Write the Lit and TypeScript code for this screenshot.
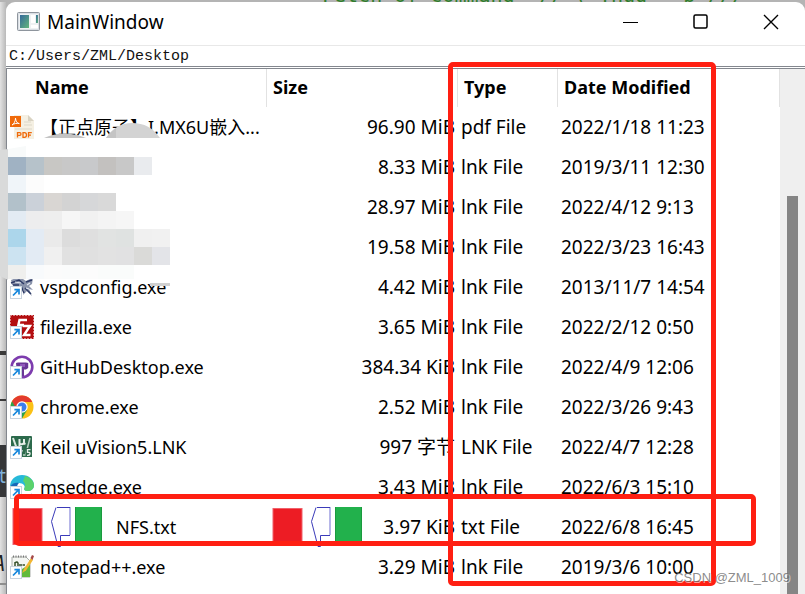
import { LitElement, html, css, svg, nothing, type TemplateResult } from "lit";
import { customElement } from "lit/decorators.js";

interface FileRow {
  name: string;
  icon: string;
  size: string;
  type: string;
  date: string;
}

const FILES: FileRow[] = [
  { name: "【正点原子】I.MX6U嵌入...", icon: "pdf", size: "96.90 MiB", type: "pdf File", date: "2022/1/18 11:23" },
  { name: "", icon: "", size: "8.33 MiB", type: "lnk File", date: "2019/3/11 12:30" },
  { name: "", icon: "", size: "28.97 MiB", type: "lnk File", date: "2022/4/12 9:13" },
  { name: "", icon: "", size: "19.58 MiB", type: "lnk File", date: "2022/3/23 16:43" },
  { name: "vspdconfig.exe", icon: "vspd", size: "4.42 MiB", type: "lnk File", date: "2013/11/7 14:54" },
  { name: "filezilla.exe", icon: "filezilla", size: "3.65 MiB", type: "lnk File", date: "2022/2/12 0:50" },
  { name: "GitHubDesktop.exe", icon: "github", size: "384.34 KiB", type: "lnk File", date: "2022/4/9 12:06" },
  { name: "chrome.exe", icon: "chrome", size: "2.52 MiB", type: "lnk File", date: "2022/3/26 9:43" },
  { name: "Keil uVision5.LNK", icon: "keil", size: "997 字节", type: "LNK File", date: "2022/4/7 12:28" },
  { name: "msedge.exe", icon: "edge", size: "3.43 MiB", type: "lnk File", date: "2022/6/3 15:10" },
  { name: "NFS.txt", icon: "nfs", size: "3.97 KiB", type: "txt File", date: "2022/6/8 16:45" },
  { name: "notepad++.exe", icon: "notepad", size: "3.29 MiB", type: "lnk File", date: "2019/3/6 10:00" },
];

// Pixelated cover over the private file names: one array of colours per 18px band.
const MOSAIC: string[][] = [
  ["#a0b2c3", "#b6c2ca", "#c8c7c4", "#c8c8c8", "#c8c9cb", "#c3c1bf", "#c8c8c8", "#e9ebee"],
  ["#f0f5f9", "#fcfcfc"],
  ["#b2c1ca", "#cbd1d9", "#d9d6d3", "#d3d3d3", "#d6d7d9", "#d9d9d9"],
  ["#e3ebf3", "#ededee", "#eeeeee", "#f6f6f6", "#f1f1f1", "#f4f4f4", "#f6f6f6"],
  ["#acd6eb", "#e3ebf4", "#eaeaea", "#dcdcdc", "#dfdfdf", "#e1e3e2", "#dfe2e1", "#f0f0f0", "#f1f1f1"],
  ["#cce3f1", "#e3ebf4", "#f0f0f0", "#e1e1e1", "#e0e0e0", "#e2e2e2", "#e1e1e2", "#dadad8", "#e3e4e8"],
];
const MOSAIC_FOOT = ["#efefed", "#f8fafc", "#fbfbfb", "#fafbfb", "#fcfcfc", "#fafcfb", "#fafcfb"];

const shortcut = svg`
  <rect x="0.5" y="11.5" width="11" height="12" fill="#fff" stroke="#c9d3de"/>
  <path d="M3 20.5L8.3 15.2M4.4 14.6H9V19.4" fill="none" stroke="#1787dc" stroke-width="1.7"/>`;

const ICONS: Record<string, TemplateResult> = {
  pdf: svg`
    <path d="M4 0H18L24 6V24H4Z" fill="#f5f0e3"/>
    <path d="M18 0V6H24Z" fill="#d9d3c3"/>
    <path d="M14 7H21M14 10H22M5 14H22" stroke="#ddd8c9" stroke-width="1"/>
    <rect x="0" y="1" width="11" height="11" fill="#f06a0a"/>
    <path d="M2 10C4 9 5.5 6 5.5 3.2C5.8 6 7 8.4 9.3 8.6C6.5 8 4 8.6 2 10Z" fill="none" stroke="#fff" stroke-width="1"/>
    <path d="M7.5 22.500V17.700H9.800Q11 17.700 11 19T9.800 20.400H7.500M13 17.700V22.300H14.500Q16.500 22.300 16.500 20T14.500 17.700ZM18.500 22.500V17.700H21.800M18.500 20.200H21" fill="none" stroke="#f06a0a" stroke-width="1.3"/>`,
  vspd: svg`
    <path d="M1 5L6 3L13 4L16 6L20 4L23 3L22 9L19 11L23 15L19 14L22 21L17 16L13 20L14 15L9 13L2 10Z" fill="#8a93ab"/>
    <path d="M1 8L9 5L14 9M16 7L22 5M15 13L21 19M11 11L14 18M3 10H9" stroke="#2d3a66" stroke-width="1.5" fill="none"/>
    <path d="M5 7L11 8M17 10L20 8M16 13L19 14" stroke="#e2e6ef" stroke-width="1.2"/>
    ${shortcut}`,
  filezilla: svg`
    <rect x="0" y="0" width="24" height="24" fill="#b30e10"/>
    <rect x="0.5" y="0.5" width="23" height="23" fill="none" stroke="#fff" stroke-dasharray="1 2"/>
    <path d="M7 16L9.5 5H17M8 10H14M12.500 11H20L14 20H20.500" fill="none" stroke="#fff" stroke-width="2.4"/>
    ${shortcut}`,
  github: svg`
    <circle cx="12" cy="12" r="10.3" fill="#fff" stroke="#7d3cae" stroke-width="2.6"/>
    <path d="M6 8L8 7.6H16L18.2 8V13L16 14.5H14V21H11V15L6.5 13Z" fill="#6a3796"/>
    <path d="M10 9H15V12H10Z" fill="#9159bb"/>
    ${shortcut}`,
  chrome: svg`
    <circle cx="12" cy="12" r="11.5" fill="#fbc116"/>
    <path d="M12 12L2 6.3A11.5 11.5 0 0 0 12 23.5L17 15Z" fill="#2ba24c"/>
    <path d="M2 6.3A11.5 11.5 0 0 1 22.3 7H12L7 15Z" fill="#e33b2e"/>
    <circle cx="12" cy="12" r="5.7" fill="#fff"/>
    <circle cx="12" cy="12" r="4.5" fill="#3b7ded"/>
    ${shortcut}`,
  keil: svg`
    <rect x="1" y="1" width="21" height="21" rx="1" fill="#2c6a4c"/>
    <path d="M3 3L7 14L10 20L12 15" fill="none" stroke="#dce9e1" stroke-width="2"/>
    <path d="M9.5 12V4M9.5 8Q11.500 10.500 14 8V4V8.500L15.500 9" fill="none" stroke="#e8f0ea" stroke-width="2"/>
    <path d="M20 3L15.500 20H13" fill="none" stroke="#b9d0c3" stroke-width="1.5"/>
    <path d="M15.500 13H22V22H15.500Z" fill="#2c6a4c"/>
    <path d="M20.5 14.7H17.5V17.3H19Q20.3 17.5 20 19T17 20.3" fill="none" stroke="#e6efe9" stroke-width="1.3"/>
    ${shortcut}`,
  edge: svg`
    <path d="M0 12C0 4 6 0 12 0C19 0 24 5 24 10C24 14 21 16 17.5 16C14.5 16 13.5 14.5 14.5 13C15.5 11 13 8 9 8C4 8 1 10 0 12Z" fill="#27b9d9"/>
    <path d="M15 1C20 2 24 6 24 10C24 14 21 16 17.5 16C14.5 16 13.5 14.5 14.5 13C16 10 15 8 13 6Z" fill="#5bd26b"/>
    <path d="M0 12C2 8 5 7.5 9 8C5.5 11 6 19 12 21.5C16 23 20 21 22 18C20 22 16 24 12 24C5 24 0 19 0 12Z" fill="#1467b8"/>
    ${shortcut}`,
  notepad: svg`
    <path d="M2 2H16L20 6V22H2Z" fill="#f5f7f3" stroke="#a9aea9" stroke-width="1"/>
    <path d="M3 1.5H18" stroke="#777" stroke-width="2" stroke-dasharray="1 1.5"/>
    <path d="M12 14L20 9V22H11Z" fill="#62ba3c"/>
    <path d="M5 13V7M5 8Q7 6 8 8V13M9 10H12M12.5 10H15" fill="none" stroke="#36502b" stroke-width="1.5"/>
    <path d="M21 3L14 14L12 18L16 15.5L23 5Z" fill="#f2b632"/>
    <path d="M20.5 3L22 0L24 1L22.5 5Z" fill="#a54848"/>
    ${shortcut}`,
};

@customElement("app-root")
export class AppRoot extends LitElement {
  static styles = css`
    :host {
      display: block;
      color: #000;
      font-family: "Noto Sans", "Noto Sans CJK SC", sans-serif;
      font-size: 19px;
      line-height: 24px;
    }
    .desktop {
      position: relative;
      display: flex;
      flex-direction: column;
      height: 100vh;
      overflow: hidden;
      background: #b4b4b4;
    }
    .behind-top {
      display: flex;
      flex: none;
      align-items: flex-end;
      height: 2px;
      padding-left: 322px;
      overflow: hidden;
      color: #2f7d2a;
      font: 20px/14px "DejaVu Sans Mono", monospace;
      white-space: pre;
    }
    .body {
      display: flex;
      flex: 1;
      min-height: 0;
    }
    .behind-left {
      flex: none;
      width: 6px;
      height: 592px;
    }
    .window {
      display: flex;
      flex: 1;
      flex-direction: column;
      min-width: 0;
      background: #fff;
      border-radius: 9px 9px 0 0;
      overflow: hidden;
    }
    .titlebar {
      display: flex;
      flex: none;
      align-items: center;
      box-sizing: border-box;
      height: 44px;
      padding: 0 0 4px 11px;
      border-bottom: 1px solid #e8e8e8;
    }
    .app-icon {
      width: 23px;
      height: 19px;
    }
    .title {
      flex: 1;
      margin: 0 0 0 7px;
      font-size: 19px;
      font-weight: 400;
    }
    .controls {
      display: flex;
    }
    .control {
      display: grid;
      place-items: center;
      width: 70px;
      height: 39px;
      padding: 0 0 0 2px;
      border: 0;
      background: none;
    }
    .path {
      flex: none;
      box-sizing: border-box;
      width: 100%;
      height: 21px;
      margin: 0 0 1px;
      padding: 1px 3px 0;
      border: 0;
      border-bottom: 1px solid #83878e;
      border-radius: 0;
      outline: 0;
      background: #fff;
      color: #111;
      font: 15px/19px "Liberation Mono", monospace;
    }
    .view {
      display: flex;
      flex: 1;
      min-height: 0;
      border-top: 1px solid #83878e;
      border-left: 1px solid #83878e;
      overflow: hidden;
    }
    .files {
      flex: 1;
      width: 0;
      min-width: 0;
      align-self: flex-start;
      border-collapse: separate;
      border-spacing: 0;
      table-layout: fixed;
    }
    .col-name {
      width: 260px;
    }
    .col-size {
      width: 191px;
    }
    .col-type {
      width: 100px;
    }
    th {
      box-sizing: border-box;
      height: 38px;
      padding: 0 0 2px 6px;
      border-right: 1px solid #e2e2e2;
      font-size: 18px;
      font-weight: 700;
      text-align: left;
    }
    .head-name {
      padding-left: 28px;
    }
    td {
      height: 40px;
      padding: 0 0 0 3px;
      white-space: nowrap;
    }
    .size {
      padding-right: 3px;
      text-align: right;
    }
    .entry {
      display: flex;
      align-items: center;
      gap: 6px;
      height: 40px;
    }
    .wide {
      gap: 14px;
      padding-left: 2px;
    }
    .name {
      font-size: 18px;
    }
    .amount {
      flex: 1;
    }
    .icon {
      flex: none;
      width: 24px;
      height: 24px;
    }
    .transfer {
      flex: none;
      width: 90px;
      height: 40px;
    }
    .scroll {
      display: flex;
      flex: none;
      justify-content: center;
      width: 25px;
      background: #efefef;
    }
    .thumb {
      width: 11px;
      margin-top: 127px;
      background: #858585;
    }
    .mosaic {
      position: absolute;
      left: 0;
      top: 120px;
      width: 180px;
      height: 170px;
    }
    .mark {
      position: absolute;
      box-sizing: border-box;
      border: 5px solid #ff1f12;
      border-radius: 5px;
      pointer-events: none;
    }
    .mark-columns {
      left: 448px;
      top: 62px;
      width: 268px;
      height: 524px;
    }
    .mark-row {
      left: 14px;
      top: 494px;
      width: 742px;
      height: 52px;
    }
    .watermark {
      position: absolute;
      right: 15px;
      bottom: 8px;
      color: rgba(110, 110, 110, 0.8);
      font: 13px/16px "Liberation Sans", sans-serif;
      text-shadow: 1px 1px 0 rgba(255, 255, 255, 0.6);
    }
  `;

  private transfer() {
    return html`<svg class="transfer" viewBox="0 0 90 40" aria-hidden="true">
      <rect x="1" y="1.5" width="29" height="36" fill="#ed1c24" stroke="#f0606a"></rect>
      <path d="M58 0V28" stroke="#b6b6e8" stroke-width="2"></path>
      <path d="M45 .5H58M58 28.5H48.5V39.5H46L39.5 14.5L44 .5" fill="none" stroke="#3b3bb9"></path>
      <rect x="63" y="0" width="27" height="37" fill="#22b14c"></rect>
      <path d="M63.5 0V37M89.5 0V37" stroke="#1a9a3e"></path>
    </svg>`;
  }

  private row(file: FileRow) {
    const wide = file.icon === "nfs";
    return html`<tr>
      <td>
        <div class=${wide ? "entry wide" : "entry"}>
          ${wide
            ? this.transfer()
            : file.icon
              ? html`<svg class="icon" viewBox="0 0 24 24" aria-hidden="true">${ICONS[file.icon]}</svg>`
              : nothing}
          <span class="name">${file.name}</span>
        </div>
      </td>
      <td class="size">
        ${wide
          ? html`<div class="entry wide">${this.transfer()}<span class="amount">${file.size}</span></div>`
          : file.size}
      </td>
      <td>${file.type}</td>
      <td>${file.date}</td>
    </tr>`;
  }

  private mosaic() {
    return html`<svg class="mosaic" viewBox="0 120 180 170" aria-hidden="true">
      <path d="M44 138Q64 129 86 138Z" fill="#c4c4c4"></path>
      <path d="M106 138Q116 123 132 123Q150 123 160 138Z" fill="#d3d3d3"></path>
      <path d="M106 138Q110 132 116 128V138Z" fill="#c4c4c4"></path>
      <path d="M0 150L8 149V280L0 276Z" fill="#d9dada"></path>
      <path d="M8 149L26 146V157H8Z" fill="#f8fafa"></path>
      <rect x="150" y="283" width="20" height="3" fill="#d0d0d0"></rect>
      ${MOSAIC.map((band, y) =>
        band.map((fill, x) => svg`<rect x=${8 + x * 18} y=${157 + y * 18} width="18" height="18" fill=${fill}></rect>`),
      )}
      ${MOSAIC_FOOT.map((fill, x) => svg`<rect x=${8 + x * 18} y="265" width="18" height="14" fill=${fill}></rect>`)}
    </svg>`;
  }

  render() {
    return html`<div class="desktop">
      <div class="behind-top" aria-hidden="true">Fetch of command  // ( Thug - p ///</div>
      <div class="body">
        <svg class="behind-left" viewBox="0 0 6 592" aria-hidden="true">
          <defs>
            <linearGradient id="edge">
              <stop offset="0" stop-color="#e2e2e2"></stop>
              <stop offset="1" stop-color="#b9b9b9"></stop>
            </linearGradient>
          </defs>
          <rect width="6" height="592" fill="url(#edge)"></rect>
          <path d="M0 351H6" stroke="#3a3a3a" stroke-width="4"></path>
          <path d="M0 398H6" stroke="#3a3a3a" stroke-width="2"></path>
          <rect y="443" width="6" height="52" fill="#353638"></rect>
          <text x="-1" y="481" font-size="19" fill="#7fb0d8">t</text>
          <text x="-7" y="569" font-size="21" font-style="italic" fill="#222">A</text>
          <path d="M0 582H6" stroke="#8e8e8e" stroke-width="2"></path>
        </svg>
        <main class="window">
          <header class="titlebar">
            <svg class="app-icon" viewBox="0 0 23 19" aria-hidden="true">
              <defs>
                <linearGradient id="screen" x2="1" y2="1">
                  <stop offset="0" stop-color="#34699b"></stop>
                  <stop offset="1" stop-color="#62b57c"></stop>
                </linearGradient>
              </defs>
              <rect x=".5" y=".5" width="22" height="18" rx="1" fill="#d9dee4" stroke="#8e959d"></rect>
              <rect x="2" y="2" width="19" height="15" fill="#eef1f3"></rect>
              <rect x="3" y="3" width="9" height="13" fill="url(#screen)"></rect>
              <rect x="14" y="3" width="4" height="8" fill="#fff"></rect>
              <rect x="19" y="3" width="2" height="8" fill="url(#screen)"></rect>
              <rect x="14" y="13" width="7" height="3" fill="#fff"></rect>
            </svg>
            <h1 class="title">MainWindow</h1>
            <div class="controls">
              <button class="control" aria-label="Minimize">
                <svg width="16" height="16"><path d="M0 8.5H15" stroke="#000"></path></svg>
              </button>
              <button class="control" aria-label="Maximize">
                <svg width="16" height="16">
                  <rect x="1" y="1" width="13" height="13" rx="1.5" fill="none" stroke="#000" stroke-width="1.5"></rect>
                </svg>
              </button>
              <button class="control" aria-label="Close">
                <svg width="16" height="16"><path d="M1 1L15 15M15 1L1 15" stroke="#000" stroke-width="1.4"></path></svg>
              </button>
            </div>
          </header>
          <input class="path" type="text" aria-label="Path" value="C:/Users/ZML/Desktop" spellcheck="false" />
          <section class="view">
            <table class="files">
              <colgroup>
                <col class="col-name" />
                <col class="col-size" />
                <col class="col-type" />
                <col />
              </colgroup>
              <thead>
                <tr>
                  <th class="head-name" scope="col">Name</th>
                  <th scope="col">Size</th>
                  <th scope="col">Type</th>
                  <th scope="col">Date Modified</th>
                </tr>
              </thead>
              <tbody>
                ${FILES.map((file) => this.row(file))}
              </tbody>
            </table>
            <div class="scroll"><div class="thumb"></div></div>
          </section>
        </main>
      </div>
      ${this.mosaic()}
      <div class="mark mark-columns"></div>
      <div class="mark mark-row"></div>
      <div class="watermark">CSDN @ZML_1009</div>
    </div>`;
  }
}
